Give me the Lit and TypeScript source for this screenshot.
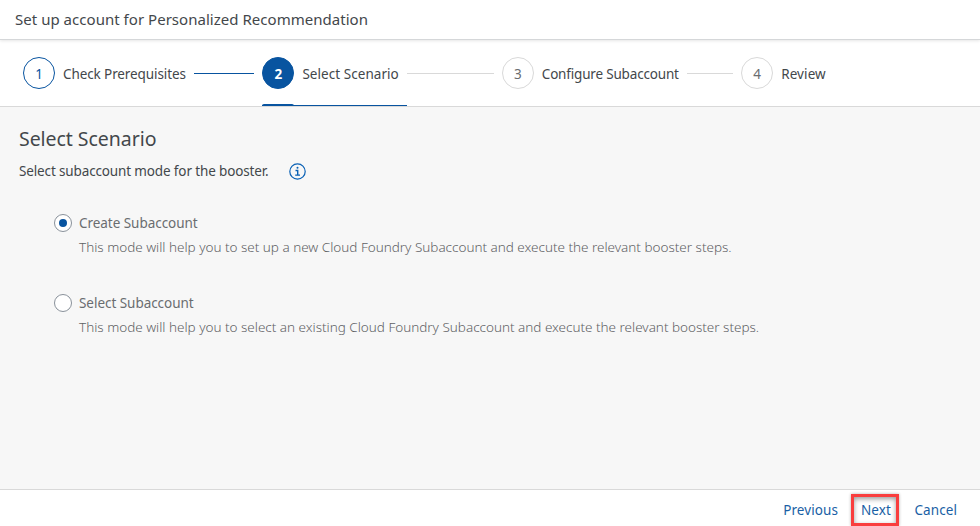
import { LitElement, html, css } from "lit";
import { customElement, property, state } from "lit/decorators.js";
import { classMap } from "lit/directives/class-map.js";

@customElement("wizard-step")
class WizardStep extends LitElement {
  @property({ type: Number }) index = 1;
  @property() label = "";
  @property() status = "upcoming";
  @property({ type: Boolean }) last = false;

  static styles = css`
    :host { display: block; box-sizing: border-box; height: 66px; font: 13.5px/20px "Noto Sans", sans-serif; color: #43474b; }
    .step { display: flex; align-items: center; height: 66px; }
    .body { position: relative; display: flex; align-items: center; height: 66px; padding-right: 8px; }
    .circle { box-sizing: border-box; width: 32px; height: 32px; border: 1px solid #d9d9d9; border-radius: 50%; display: flex; align-items: center; justify-content: center; color: #6a6d70; background: #fff; flex: none; padding-top: 1px; }
    .label { margin-left: 8px; white-space: nowrap; padding-top: 2px; letter-spacing: -0.1px; }
    .upcoming .label { letter-spacing: -0.18px; }
    .current .label { letter-spacing: 0.05px; }
    .last .label { letter-spacing: 0.1px; }
    .line { flex: 1; height: 1px; background: #d9d9d9; margin-right: 8px; }
    .done .circle { border-color: #0854a0; color: #0854a0; }
    .done .line { background: #0854a0; }
    .current .circle { border-color: #0854a0; background: #0854a0; color: #fff; font-weight: 700; }
    .current .body::before { content: ""; position: absolute; left: 0; right: 0; bottom: 0; height: 1px; background: #0854a0; }
    .current .body::after { content: ""; position: absolute; left: 0; width: 32px; bottom: 0; height: 2px; border-radius: 2px 2px 0 0; background: #0854a0; }
  `;

  render() {
    return html`<div class="step ${this.status} ${this.last ? "last" : ""}">
      <div class="body"><span class="circle">${this.index}</span><span class="label">${this.label}</span></div>
      ${this.last ? "" : html`<span class="line"></span>`}
    </div>`;
  }
}

@customElement("app-root")
class AppRoot extends LitElement {
  @state() private mode = 0;

  private steps = ["Check Prerequisites", "Select Scenario", "Configure Subaccount", "Review"];
  private modes = [
    { title: "Create Subaccount", text: "This mode will help you to set up a new Cloud Foundry Subaccount and execute the relevant booster steps." },
    { title: "Select Subaccount", text: "This mode will help you to select an existing Cloud Foundry Subaccount and execute the relevant booster steps." },
  ];

  static styles = css`
    :host { display: flex; flex-direction: column; box-sizing: border-box; height: 526px; overflow: hidden; background: #f7f7f7; color: #43474b; font: 13.5px/20px "Noto Sans", sans-serif; }
    .header { position: relative; box-sizing: border-box; flex: none; height: 40px; padding: 8px 15px 0; background: #fff; border-bottom: 1px solid #d5d7d9; box-shadow: 0 1px 3px rgba(0, 0, 0, 0.1); font-size: 15px; line-height: 22px; letter-spacing: 0.03px; }
    .steps { display: grid; grid-template-columns: repeat(4, 239.4px); flex: none; box-sizing: border-box; height: 67px; padding-left: 23px; background: #fff; border-bottom: 1px solid #d9d9d9; }
    .content { flex: 1; padding: 18px 19px 0; }
    h1 { margin: 0; font-size: 19.5px; line-height: 28px; font-weight: 400; letter-spacing: -0.05px; }
    .hint { display: flex; align-items: center; gap: 20px; height: 20px; margin-top: 8px; }
    .hinttext { letter-spacing: -0.14px; }
    .hint svg { width: 17px; height: 17px; }
    .options { padding: 32px 0 0 35px; }
    .option { display: grid; grid-template-columns: 18px 1fr; column-gap: 7px; row-gap: 4px; height: 80px; align-content: start; cursor: pointer; }
    .radio { box-sizing: border-box; width: 18px; height: 18px; border: 1px solid #89919a; border-radius: 50%; background: #fff; display: flex; align-items: center; justify-content: center; align-self: center; }
    .radio.checked::after { content: ""; width: 8px; height: 8px; border-radius: 50%; background: #0854a0; }
    .name { color: #6a6d70; letter-spacing: -0.04px; }
    .text { grid-column: 2; color: #5f6265; font-weight: 300; white-space: nowrap; letter-spacing: -0.012px; }
    .footer { flex: none; box-sizing: border-box; display: flex; justify-content: flex-end; align-items: flex-start; height: 37px; padding: 4px 23px 0 0; border-top: 1px solid #d9d9d9; background: #fff; }
    .action { box-sizing: border-box; height: 32px; padding: 6px 0 0; color: #1a5fa5; letter-spacing: 0.08px; }
    .highlight { width: 48px; margin: 0 15.5px 0 13px; border: 3px solid #f93e3e; padding: 3px 0 0 7px; box-shadow: 0 0 3px rgba(0, 0, 0, 0.3), inset 0 2px 5px rgba(0, 0, 0, 0.4); }
  `;

  render() {
    return html`
      <div class="header">Set up account for Personalized Recommendation</div>
      <div class="steps">
        ${this.steps.map((label, i) => html`<wizard-step .index=${i + 1} .label=${label}
          .status=${i === 0 ? "done" : i === 1 ? "current" : "upcoming"} .last=${i === 3}></wizard-step>`)}
      </div>
      <div class="content">
        <h1>Select Scenario</h1>
        <div class="hint"><span class="hinttext">Select subaccount mode for the booster.</span>
          <svg viewBox="0 0 17 17" fill="none" stroke="#0a61b5">
            <circle cx="8.5" cy="8.5" r="7.7" stroke-width="1.2"/>
            <path d="M6.5 7.5H8.7V12M6.2 12.1H11" stroke-width="1.4"/>
            <circle cx="8.5" cy="4.8" r="1" fill="#0a61b5" stroke="none"/>
          </svg>
        </div>
        <div class="options">
          ${this.modes.map((m, i) => html`<div class="option" @click=${() => (this.mode = i)}>
            <span class=${classMap({ radio: true, checked: this.mode === i })}></span>
            <span class="name">${m.title}</span>
            <span class="text">${m.text}</span>
          </div>`)}
        </div>
      </div>
      <div class="footer">
        <span class="action">Previous</span>
        <span class="action highlight">Next</span>
        <span class="action">Cancel</span>
      </div>`;
  }
}
